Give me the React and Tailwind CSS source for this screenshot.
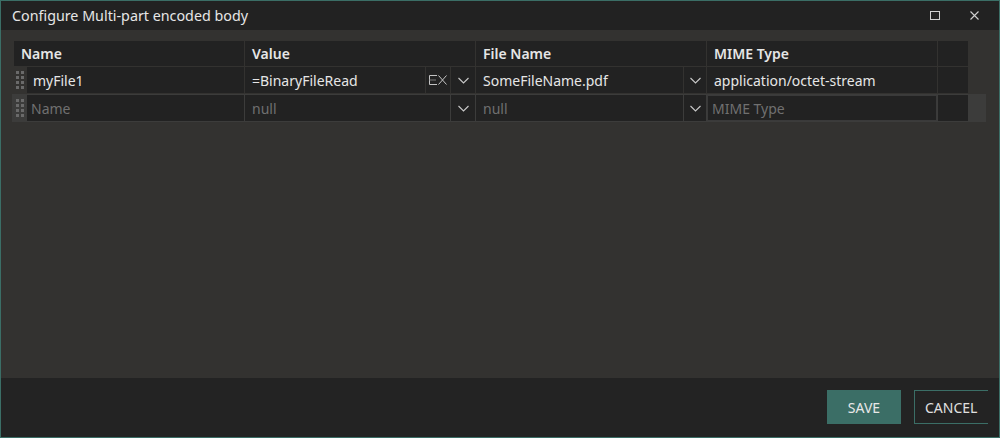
import React from "react";

const font = { fontFamily: '"Noto Sans", "Open Sans", Arial, sans-serif' };

function Chevron() {
    return (
        <svg width="11" height="7" viewBox="0 0 11 7" fill="none" stroke="#c8c8c8" strokeWidth="1.1">
            <path d="M0.5 1 L5.5 6 L10.5 1" />
        </svg>
    );
}

function ExprIcon() {
    return (
        <svg width="20" height="10" viewBox="0 0 20 10" fill="none" strokeWidth="1">
            <path d="M9 0.5 H1.5 V9.5 H9" stroke="#c4c4c4" />
            <path d="M1.5 5 H8" stroke="#7a7a7a" />
            <path d="M10.5 0.5 L18.5 9.5 M18.5 0.5 L10.5 9.5" stroke="#c4c4c4" />
        </svg>
    );
}

function Grip() {
    return (
        <div className="grid w-[12px] shrink-0 grid-cols-2 content-center justify-center gap-x-[1px] gap-y-[2px] px-[2px]">
            {Array.from({length: 8}).map((_, i) => (
                <span key={i} className="block h-[3px] w-[3px] bg-[#6a6a6a]"/>
            ))}
        </div>
    );
}

function Cell({width, children, muted, className = ""}) {
    return (
        <div className={`flex h-full shrink-0 items-center bg-[#222222] text-[14px] ${muted ? "text-[#707070]" : "text-[#e6e6e6]"} ${className}`}
             style={{width}}>
            {children}
        </div>
    );
}

function IconCell({width, children}) {
    return (
        <div className="flex h-full shrink-0 items-center justify-center bg-[#222222]" style={{width}}>
            {children}
        </div>
    );
}

export default function App() {
    return (
        <div className="h-[438px] w-[1000px] overflow-hidden border border-[#3b6e66] bg-[#232323]" style={font}>
            <div className="flex h-[29px] items-center justify-between bg-[#222222] pl-[11px] pr-[20px]">
                <span className="text-[14.3px] text-[#e6e6e6]">Configure Multi-part encoded body</span>
                <div className="flex items-center gap-[30px]">
                    <span className="block h-[9px] w-[10px] border border-[#d0d0d0]"/>
                    <svg width="9" height="9" viewBox="0 0 9 9" stroke="#d0d0d0" strokeWidth="1.1">
                        <path d="M0.5 0.5 L8.5 8.5 M8.5 0.5 L0.5 8.5"/>
                    </svg>
                </div>
            </div>

            <div className="h-[348px] bg-[#333230] pt-[11px] pl-[13px]">
                <div className="flex h-[25px] gap-px font-semibold">
                    {["Name", "Value", "File Name", "MIME Type"].map((h) => (
                        <Cell key={h} width={230} className="pl-[7px]">{h}</Cell>
                    ))}
                    <Cell width={30}/>
                </div>

                <div className="mt-px flex h-[26px] gap-px">
                    <Grip/>
                    <Cell width={217} className="pl-[6px]">myFile1</Cell>
                    <Cell width={180} className="pl-[7px]">=BinaryFileRead</Cell>
                    <IconCell width={24}><ExprIcon/></IconCell>
                    <IconCell width={24}><Chevron/></IconCell>
                    <Cell width={207} className="pl-[7px]">SomeFileName.pdf</Cell>
                    <IconCell width={22}><Chevron/></IconCell>
                    <Cell width={230} className="pl-[7px]">application/octet-stream</Cell>
                    <Cell width={30}/>
                </div>

                <div className="-ml-[2px] mt-px flex h-[28px] w-[974px] gap-px bg-[#3c3c3b] py-px pl-[2px]">
                    <Grip/>
                    <Cell width={217} muted className="pl-[4px]">Name</Cell>
                    <Cell width={205} muted className="pl-[7px]">null</Cell>
                    <IconCell width={24}><Chevron/></IconCell>
                    <Cell width={207} muted className="pl-[7px]">null</Cell>
                    <IconCell width={22}><Chevron/></IconCell>
                    <Cell width={230} muted className="border border-[#3a3a3a] pl-[4px]">MIME Type</Cell>
                    <Cell width={30}/>
                </div>
            </div>

            <div className="flex h-[59px] items-start justify-end gap-[13px] pt-[12px] pr-[11px]">
                <button className="h-[34px] w-[74px] bg-[#3b6e66] text-[14px] text-[#e8e8e8]">SAVE</button>
                <div className="h-[34px] w-[74px] overflow-hidden">
                    <button className="h-[34px] w-[90px] border border-[#3b6e66] pl-[10px] text-left text-[14px] text-[#e0e0e0]">CANCEL</button>
                </div>
            </div>
        </div>
    );
}
